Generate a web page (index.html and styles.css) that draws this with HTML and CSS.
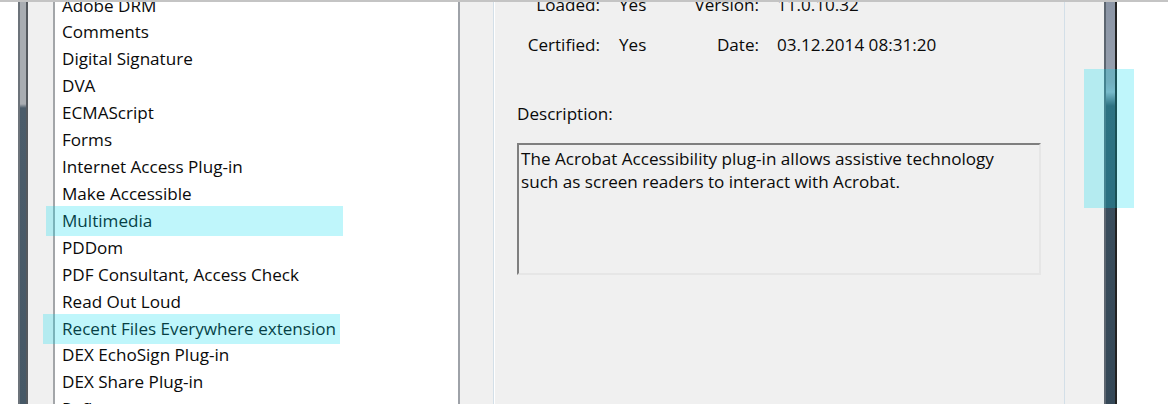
FILE: index.html
```html
<!DOCTYPE html>
<html>
<head>
<meta charset="utf-8">
<link rel="stylesheet" href="styles.css">
</head>
<body>
<div class="screen">
  <div class="gutter"></div>
  <div class="bar-left"></div>
  <div class="strip"></div>
  <ul class="list">
    <li>Adobe DRM</li>
    <li>Comments</li>
    <li>Digital Signature</li>
    <li>DVA</li>
    <li>ECMAScript</li>
    <li>Forms</li>
    <li>Internet Access Plug-in</li>
    <li>Make Accessible</li>
    <li>Multimedia</li>
    <li>PDDom</li>
    <li>PDF Consultant, Access Check</li>
    <li>Read Out Loud</li>
    <li>Recent Files Everywhere extension</li>
    <li>DEX EchoSign Plug-in</li>
    <li>DEX Share Plug-in</li>
    <li>Reflow</li>
  </ul>
  <div class="panel">
    <div class="inner">
      <div class="info">
        <div class="lbl">Loaded:</div><div class="val">Yes</div>
        <div class="lbl">Version:</div><div class="val2">11.0.10.32</div>
        <div class="lbl">Certified:</div><div class="val">Yes</div>
        <div class="lbl">Date:</div><div class="val2">03.12.2014 08:31:20</div>
      </div>
      <div class="desc-label">Description:</div>
      <div class="desc-box">The Acrobat Accessibility plug-in allows assistive technology<br>such as screen readers to interact with Acrobat.</div>
    </div>
  </div>
  <div class="bar-right"></div>
  <div class="rest"></div>
</div>
<div class="hl hl-multimedia"></div>
<div class="hl hl-recent"></div>
<div class="hl hl-bar"></div>
</body>
</html>
```
FILE: styles.css
```css
html, body {
  margin: 0;
  padding: 0;
  background: #ffffff;
}
body {
  width: 1168px;
  height: 404px;
  overflow: hidden;
  position: relative;
  font-family: "Segoe UI", "Open Sans", "Noto Sans", sans-serif;
  font-size: 17.1px;
  color: #0a0a0a;
}
.screen {
  display: flex;
  height: 402px;
  border-top: 2px solid #c4c4c4;
  overflow: hidden;
}
.gutter {
  width: 18px;
  flex: none;
  background: #ffffff;
}
.bar-left {
  width: 6px;
  flex: none;
  border-left: 2px solid #6c737a;
  border-right: 2px solid #55595e;
  background: linear-gradient(to bottom, #a9adb2 0, #a9adb2 102px, #4b5c6a 106px, #465866 100%);
}
.strip {
  width: 25px;
  flex: none;
  background: #f0f0f0;
}
.list {
  list-style: none;
  margin: 0;
  padding: 0 0 0 7px;
  width: 396px;
  flex: none;
  background: #ffffff;
  border-left: 2px solid #a3a6a9;
  border-right: 2px solid #9ea2a8;
}
.list li {
  height: 26.93px;
  line-height: 26.93px;
  white-space: nowrap;
}
.list li:first-child {
  margin-top: -9.5px;
}
.panel {
  width: 644px;
  flex: none;
  background: #f0f0f0;
  padding: 0 39px 0 33px;
  box-sizing: border-box;
  display: flex;
}
.inner {
  flex: 1;
  border-left: 1px solid #d3dfe8;
  border-right: 1px solid #d3dfe8;
  box-shadow: inset 1px 0 0 #ffffff;
}
.info {
  display: grid;
  grid-template-columns: 106px 80px 79px auto;
  grid-auto-rows: 40px;
  line-height: 40px;
  margin-top: -17px;
  white-space: nowrap;
}
.lbl {
  text-align: right;
}
.val {
  padding-left: 19px;
}
.val2 {
  padding-left: 18px;
}
.desc-label {
  margin: 34.5px 0 0 23px;
  line-height: 27px;
}
.desc-box {
  margin: 16.5px 0 0 23px;
  width: 524px;
  height: 132px;
  box-sizing: border-box;
  border-top: 2px solid #7f7f7f;
  border-left: 2px solid #7f7f7f;
  border-right: 2px solid #e6e6e6;
  border-bottom: 2px solid #e6e6e6;
  background: #f0f0f0;
  padding: 3px 2px;
  line-height: 22.5px;
  white-space: nowrap;
}
.bar-right {
  width: 9px;
  flex: none;
  border-left: 2px solid #5d6670;
  border-right: 2px solid #222222;
  background: linear-gradient(to bottom, #8b95a5 0, #97a0ae 80px, #9fb0bf 90px, #3c4f5e 104px, #354857 100%);
}
.rest {
  flex: 1;
  background: #ffffff;
}
.hl {
  position: absolute;
  background: rgba(0, 220, 240, 0.25);
}
.hl-multimedia {
  left: 46px;
  top: 206px;
  width: 297px;
  height: 30px;
}
.hl-recent {
  left: 43px;
  top: 314px;
  width: 297px;
  height: 30px;
}
.hl-bar {
  left: 1084px;
  top: 69px;
  width: 50px;
  height: 139px;
}
```
